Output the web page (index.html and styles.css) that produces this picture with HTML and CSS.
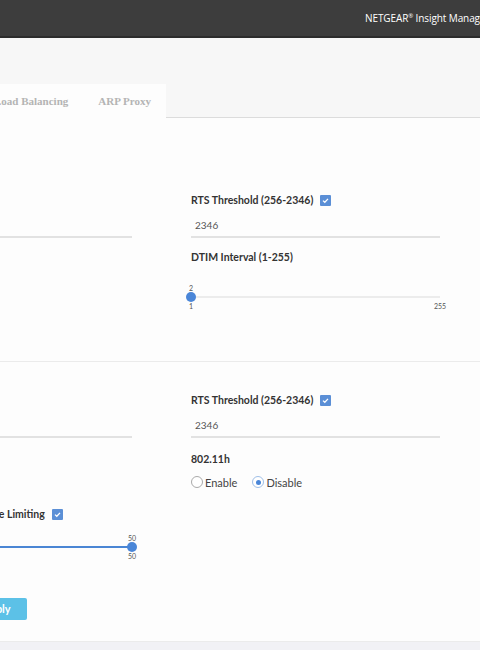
FILE: index.html
```html
<!DOCTYPE html>
<html>
<head>
<meta charset="utf-8">
<link rel="stylesheet" href="styles.css">
</head>
<body>
<header class="topbar">
  <span class="brand">NETGEAR<sup>®</sup> Insight Manager</span>
</header>
<div class="subhead"></div>
<nav class="tabs">
  <div class="tab-list">
    <span class="tab">Load Balancing</span>
    <span class="tab">ARP Proxy</span>
  </div>
  <div class="tab-fill"></div>
</nav>

<section class="section section-one">
  <div class="cols">
    <div class="col col-left">
      <div class="field">
        <div class="label"></div>
        <div class="input"></div>
      </div>
    </div>
    <div class="col col-right">
      <div class="field">
        <div class="label">RTS Threshold (256-2346) <span class="check"><svg viewBox="0 0 11 11" width="11" height="11"><path d="M3 5.6 L4.8 7.3 L8 3.9" fill="none" stroke="#fff" stroke-width="1.3"/></svg></span></div>
        <div class="input">2346</div>
      </div>
      <div class="field field-gap">
        <div class="label">DTIM Interval (1-255)</div>
        <div class="slider slider-start">
          <div class="slider-value"><span>2</span></div>
          <div class="track"><div class="thumb"></div></div>
          <div class="slider-range"><span>1</span><span>255</span></div>
        </div>
      </div>
    </div>
  </div>
</section>

<section class="section section-two">
  <div class="cols">
    <div class="col col-left">
      <div class="field">
        <div class="label"></div>
        <div class="input"></div>
      </div>
      <div class="label rate-label">Rate Limiting <span class="check"><svg viewBox="0 0 11 11" width="11" height="11"><path d="M3 5.6 L4.8 7.3 L8 3.9" fill="none" stroke="#fff" stroke-width="1.3"/></svg></span></div>
      <div class="slider slider-end">
        <div class="slider-value"><span>50</span></div>
        <div class="track track-filled"><div class="thumb"></div></div>
        <div class="slider-range"><span></span><span>50</span></div>
      </div>
      <div class="actions"><button class="btn">Apply</button></div>
    </div>
    <div class="col col-right">
      <div class="field">
        <div class="label">RTS Threshold (256-2346) <span class="check"><svg viewBox="0 0 11 11" width="11" height="11"><path d="M3 5.6 L4.8 7.3 L8 3.9" fill="none" stroke="#fff" stroke-width="1.3"/></svg></span></div>
        <div class="input">2346</div>
      </div>
      <div class="field field-gap2">
        <div class="label">802.11h</div>
        <div class="radios">
          <label class="radio"><span class="dot"></span>Enable</label>
          <label class="radio"><span class="dot dot-on"></span>Disable</label>
        </div>
      </div>
    </div>
  </div>
</section>
<div class="footer-band"></div>
</body>
</html>
```

FILE: styles.css
```css
* { box-sizing: border-box; }
html, body { margin: 0; padding: 0; }
body {
  width: 480px;
  height: 650px;
  overflow: hidden;
  background: #fdfdfd;
  font-family: "Lato", "Noto Sans", sans-serif;
  color: #333;
}
.topbar {
  height: 38px;
  background: #3d3d3d;
  border-bottom: 2px solid #2c2c2c;
  display: flex;
  align-items: center;
  padding-left: 365px;
  white-space: nowrap;
  overflow: hidden;
}
.brand {
  color: #fff;
  font-size: 10px;
  font-family: "Open Sans", "Liberation Sans", sans-serif;
  letter-spacing: -0.1px;
}
.brand sup { font-size: 6px; }
.subhead {
  height: 46px;
  background: #f7f7f7;
}
.tabs {
  display: flex;
  height: 34px;
  background: #f7f7f7;
}
.tab-list {
  display: flex;
  background: #fdfdfd;
  margin-left: -21px;
}
.tab {
  padding: 0 15px;
  line-height: 34px;
  font-family: "Liberation Serif", "DejaVu Serif", serif;
  font-weight: bold;
  font-size: 11px;
  color: #b4b4b4;
}
.tab-fill {
  flex: 1;
  border-bottom: 1px solid #dcdcdc;
}
.section {
  border-bottom: 1px solid #ebebeb;
}
.section-one { padding: 74px 0 51px; }
.section-two { padding: 30px 0 21px; }
.cols {
  display: flex;
  gap: 59px;
  margin-left: -17px;
}
.col-left { width: 149px; }
.col-right { width: 249px; }
.label {
  font-size: 10.5px;
  font-weight: bold;
  line-height: 16px;
  height: 16px;
  color: #333;
  display: flex;
  align-items: center;
  white-space: nowrap;
}
.check {
  display: inline-block;
  width: 11px;
  height: 11px;
  background: #5b8fd6;
  border-radius: 1px;
  margin-left: 7px;
}
.check svg { display: block; }
.input {
  margin-top: 6px;
  height: 24px;
  border-bottom: 2px solid #e2e2e2;
  font-size: 10px;
  line-height: 22px;
  color: #555;
  padding-left: 4px;
}
.field-gap { margin-top: 11px; }
.field-gap2 { margin-top: 13px; }
.slider { margin-top: 19px; font-size: 7px; color: #555; }
.slider-value { height: 8px; line-height: 8px; display: flex; }
.slider-end .slider-value { justify-content: flex-end; }
.slider-value span { transform: translateX(-50%); }
.slider-end .slider-value span { transform: translateX(50%); }
.track {
  height: 10px;
  position: relative;
  display: flex;
  align-items: center;
}
.track::before {
  content: "";
  flex: 1;
  height: 2px;
  background: #ececec;
}
.track-filled::before { background: #4a86d4; }
.thumb {
  position: absolute;
  top: 0;
  left: -5px;
  width: 10px;
  height: 10px;
  border-radius: 50%;
  background: #4a86d8;
}
.slider-end .thumb { left: auto; right: -5px; }
.slider-range {
  height: 8px;
  line-height: 8px;
  display: flex;
  justify-content: space-between;
}
.slider-start .slider-range span:first-child { transform: translateX(-50%); }
.slider-range span:last-child { transform: translateX(50%); }
.rate-label { margin-top: 68px; }
.slider-end { margin-top: 12px; }
.actions { margin-top: 37px; }
.btn {
  margin-left: -17px;
  height: 22px;
  padding: 0 16px;
  border: none;
  border-radius: 2px;
  background: #5cc1e7;
  color: #fff;
  font-family: inherit;
  font-weight: bold;
  font-size: 11px;
}
.radios {
  margin-top: 7px;
  display: flex;
  gap: 15px;
  height: 16px;
  align-items: center;
}
.radio {
  display: flex;
  align-items: center;
  font-size: 11px;
  color: #444;
}
.dot {
  width: 12px;
  height: 12px;
  border-radius: 50%;
  border: 1px solid #aaa;
  margin-right: 2px;
  background: #fff;
  display: flex;
  align-items: center;
  justify-content: center;
}
.dot-on { border-color: #9fbfe8; }
.dot-on::after {
  content: "";
  width: 5px;
  height: 5px;
  border-radius: 50%;
  background: #4a86d8;
}
.footer-band {
  height: 10px;
  background: #f1f1f5;
}
```
